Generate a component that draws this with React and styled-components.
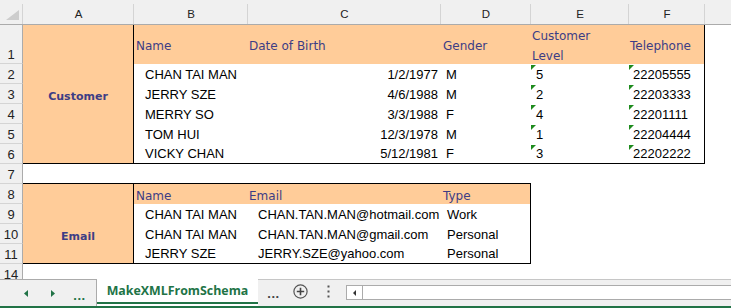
import React from 'react'
import styled, { createGlobalStyle } from 'styled-components'

const customers = [
  ['CHAN TAI MAN', '1/2/1977', 'M', '5', '22205555'],
  ['JERRY SZE', '4/6/1988', 'M', '2', '22203333'],
  ['MERRY SO', '3/3/1988', 'F', '4', '22201111'],
  ['TOM HUI', '12/3/1978', 'M', '1', '22204444'],
  ['VICKY CHAN', '5/12/1981', 'F', '3', '22202222'],
]

const emails = [
  ['CHAN TAI MAN', 'CHAN.TAN.MAN@hotmail.com', 'Work'],
  ['CHAN TAI MAN', 'CHAN.TAN.MAN@gmail.com', 'Personal'],
  ['JERRY SZE', 'JERRY.SZE@yahoo.com', 'Personal'],
]

const rowNumbers = ['1', '2', '3', '4', '5', '6', '7', '8', '9', '10', '11', '14']
const columns = ['A', 'B', 'C', 'D', 'E', 'F', '']

const GlobalStyle = createGlobalStyle`
  html, body { margin: 0; padding: 0; }
  body {
    width: 731px;
    height: 308px;
    overflow: hidden;
    background: #fff;
    font-family: "Liberation Sans", Arial, sans-serif;
  }
`

const Window = styled.div`
  width: 731px;
  height: 308px;
  display: flex;
  flex-direction: column;
  overflow: hidden;
`

const Sheet = styled.div`
  display: grid;
  grid-template-columns: 23px 111px 114px 193px 90px 98px 76px 1fr;
  grid-template-rows: 25px 39px repeat(5, 20px) 20px 20px repeat(3, 20px) 20px;
  height: 279px;
  overflow: hidden;
  flex-shrink: 0;
`

const headerBg = `linear-gradient(#d4d4d4, #d4d4d4) right bottom / 1px 20px no-repeat, #f0f0f0`

const Corner = styled.div`
  display: flex;
  justify-content: flex-end;
  align-items: flex-end;
  padding: 0 4px 4px 0;
  background: ${headerBg};
  border-bottom: 1px solid #ababab;
`

const ColHead = styled.div`
  display: flex;
  align-items: flex-end;
  justify-content: center;
  padding-bottom: 4px;
  background: ${p => (p.$last ? '#f0f0f0' : headerBg)};
  border-bottom: 1px solid #ababab;
  font-size: 11.5px;
  line-height: 1;
  color: #222;
`

const RowHead = styled.div`
  grid-column: 1;
  grid-row: ${p => p.$row};
  display: flex;
  align-items: flex-end;
  justify-content: center;
  padding-bottom: 2px;
  background: #f0f0f0;
  border-right: 1px solid #ababab;
  border-bottom: 1px solid #d4d4d4;
  font-size: 13px;
  line-height: 1;
  color: #222;
`

const Table = styled.div`
  grid-area: ${p => p.$area};
  display: grid;
  grid-template-columns: ${p => p.$cols};
  grid-template-rows: ${p => p.$rows};
  border-right: 1px solid #000;
  border-bottom: 1px solid #000;
  ${p => p.$boxed && 'border-top: 1px solid #000; margin-top: -1px;'}
  background: #fff;
`

const Label = styled.div`
  grid-column: 1;
  grid-row: 1 / -1;
  display: flex;
  justify-content: center;
  align-items: ${p => p.$valign || 'center'};
  padding: ${p => p.$pad || '0'};
  background: #ffcc99;
  border-right: 1px solid #000;
  font-family: "DejaVu Sans", Verdana, sans-serif;
  font-weight: 700;
  font-size: 11px;
  line-height: 1;
  color: #3d3d85;
`

const Head = styled.div`
  display: flex;
  align-items: ${p => p.$valign || 'center'};
  padding: ${p => p.$pad || '3px 0 0 1px'};
  background: #ffcc99;
  font-family: "DejaVu Sans", Verdana, sans-serif;
  font-size: 12px;
  line-height: ${p => (p.$wrap ? '20px' : '1')};
  color: #3d3d85;
  white-space: nowrap;
`

const Data = styled.div`
  position: relative;
  display: flex;
  align-items: flex-end;
  justify-content: ${p => (p.$right ? 'flex-end' : 'flex-start')};
  padding: 0 ${p => p.$pr || 0}px 3px ${p => p.$pl || 0}px;
  font-size: 13px;
  line-height: 1;
  color: #000;
  white-space: nowrap;
`

const ErrMark = styled.span`
  position: absolute;
  top: 1px;
  left: 0;
  width: 0;
  height: 0;
  border-top: 5px solid #1e8b1e;
  border-right: 5px solid transparent;
`

const TabBar = styled.div`
  display: flex;
  height: 27px;
  background: #fff;
  flex-shrink: 0;
`

const NavBox = styled.div`
  display: flex;
  align-items: center;
  width: 97px;
  padding-left: 12px;
  box-sizing: border-box;
  background: #f0f0f0;
  border-top: 1px solid #ababab;
  border-right: 1px solid #ababab;
`

const Slot = styled.div`
  display: flex;
  align-items: center;
  justify-content: center;
  width: ${p => p.$w || 27}px;
  height: 100%;
  color: ${p => p.$color || '#444'};
  font-weight: 700;
  font-size: 13px;
`

const Dots = styled.span`
  font-family: "Liberation Sans", Arial, sans-serif;
  font-weight: 700;
  font-size: 13px;
  letter-spacing: 0.5px;
  margin-top: 4px;
  color: ${p => p.$color || '#444'};
`

const ActiveTab = styled.div`
  display: flex;
  align-items: center;
  justify-content: center;
  width: 161px;
  height: 25px;
  box-sizing: border-box;
  border-bottom: 2px solid #217346;
  background: #fff;
  font-family: "Open Sans", "Liberation Sans", sans-serif;
  font-weight: 700;
  font-size: 12.4px;
  color: #217346;
`

const Rest = styled.div`
  flex: 1;
  display: flex;
  align-items: flex-start;
  height: 100%;
  box-sizing: border-box;
  padding-left: 2px;
  background: #f0f0f0;
  border-top: 1px solid #c6c6c6;
`

const Tools = styled.div`
  display: flex;
  height: 22px;
`

const ScrollTrack = styled.div`
  flex: 1;
  display: flex;
  height: 15px;
  margin: 5px 0 0 3px;
  box-sizing: border-box;
  background: #fff;
  border: 1px solid #ababab;
  border-right: none;
`

const ScrollButton = styled.div`
  display: flex;
  align-items: center;
  justify-content: center;
  width: 15px;
  border-right: 1px solid #ababab;
`

const StatusBar = styled.div`
  height: 2px;
  background: #217346;
  flex-shrink: 0;
`

const Triangle = ({ dir, color = '#217346', w = 4, h = 7 }) => (
  <svg width={w} height={h} viewBox={`0 0 ${w} ${h}`}>
    {dir === 'left'
      ? <polygon points={`${w},0 ${w},${h} 0,${h / 2}`} fill={color} />
      : <polygon points={`0,0 0,${h} ${w},${h / 2}`} fill={color} />}
  </svg>
)

export default function App() {
  return (
    <>
      <GlobalStyle />
      <Window>
        <Sheet>
          <Corner>
            <svg width="13" height="10" viewBox="0 0 13 10">
              <polygon points="13,0 13,10 0,10" fill="#cdcdcd" />
            </svg>
          </Corner>
          {columns.map((c, i) => (
            <ColHead key={i} $last={i === columns.length - 1}>{c}</ColHead>
          ))}
          {rowNumbers.map((n, i) => (
            <RowHead key={n} $row={i + 2}>{n}</RowHead>
          ))}

          <Table $area="2 / 2 / 8 / 8" $cols="111px 114px 193px 90px 98px 1fr" $rows="39px repeat(4, 20px) 1fr">
            <Label $pad="5px 0 0 0">Customer</Label>
            <Head $pad="3px 0 0 2px">Name</Head>
            <Head>Date of Birth</Head>
            <Head $pad="3px 0 0 2px">Gender</Head>
            <Head $wrap $valign="flex-start" $pad="1px 0 0 1px">Customer<br />Level</Head>
            <Head>Telephone</Head>
            {customers.map(([name, dob, gender, level, tel]) => (
              <React.Fragment key={name}>
                <Data $pl={11}>{name}</Data>
                <Data $right $pr={3}>{dob}</Data>
                <Data $pl={5}>{gender}</Data>
                <Data $pl={5}><ErrMark />{level}</Data>
                <Data $pl={4}><ErrMark />{tel}</Data>
              </React.Fragment>
            ))}
          </Table>

          <Table $area="9 / 2 / 13 / 6" $boxed $cols="111px 114px 193px 1fr" $rows="20px 20px 20px 1fr">
            <Label $valign="flex-end" $pad="0 0 21px 0">Email</Label>
            <Head $valign="flex-end" $pad="0 0 2px 2px">Name</Head>
            <Head $valign="flex-end" $pad="0 0 2px 1px">Email</Head>
            <Head $valign="flex-end" $pad="0 0 2px 2px">Type</Head>
            {emails.map(([name, mail, type]) => (
              <React.Fragment key={mail}>
                <Data $pl={11}>{name}</Data>
                <Data $pl={10}>{mail}</Data>
                <Data $pl={6}>{type}</Data>
              </React.Fragment>
            ))}
          </Table>
        </Sheet>

        <TabBar>
          <NavBox>
            <Slot><Triangle dir="left" /></Slot>
            <Slot><Triangle dir="right" /></Slot>
            <Slot><Dots $color="#217346">...</Dots></Slot>
          </NavBox>
          <ActiveTab>MakeXMLFromSchema</ActiveTab>
          <Rest>
            <Tools>
              <Slot><Dots>...</Dots></Slot>
              <Slot>
                <svg width="15" height="15" viewBox="0 0 15 15">
                  <circle cx="7.5" cy="7.5" r="6.6" fill="none" stroke="#555" strokeWidth="1.2" />
                  <path d="M7.5 3.8v7.4M3.8 7.5h7.4" stroke="#444" strokeWidth="1.6" />
                </svg>
              </Slot>
              <Slot $w={29}>
                <svg width="3" height="13" viewBox="0 0 3 13">
                  <rect x="0.5" y="0.5" width="2" height="2" fill="#555" />
                  <rect x="0.5" y="5.5" width="2" height="2" fill="#555" />
                  <rect x="0.5" y="10.5" width="2" height="2" fill="#555" />
                </svg>
              </Slot>
            </Tools>
            <ScrollTrack>
              <ScrollButton><Triangle dir="left" color="#333" w={3} h={6} /></ScrollButton>
            </ScrollTrack>
          </Rest>
        </TabBar>
        <StatusBar />
      </Window>
    </>
  )
}
